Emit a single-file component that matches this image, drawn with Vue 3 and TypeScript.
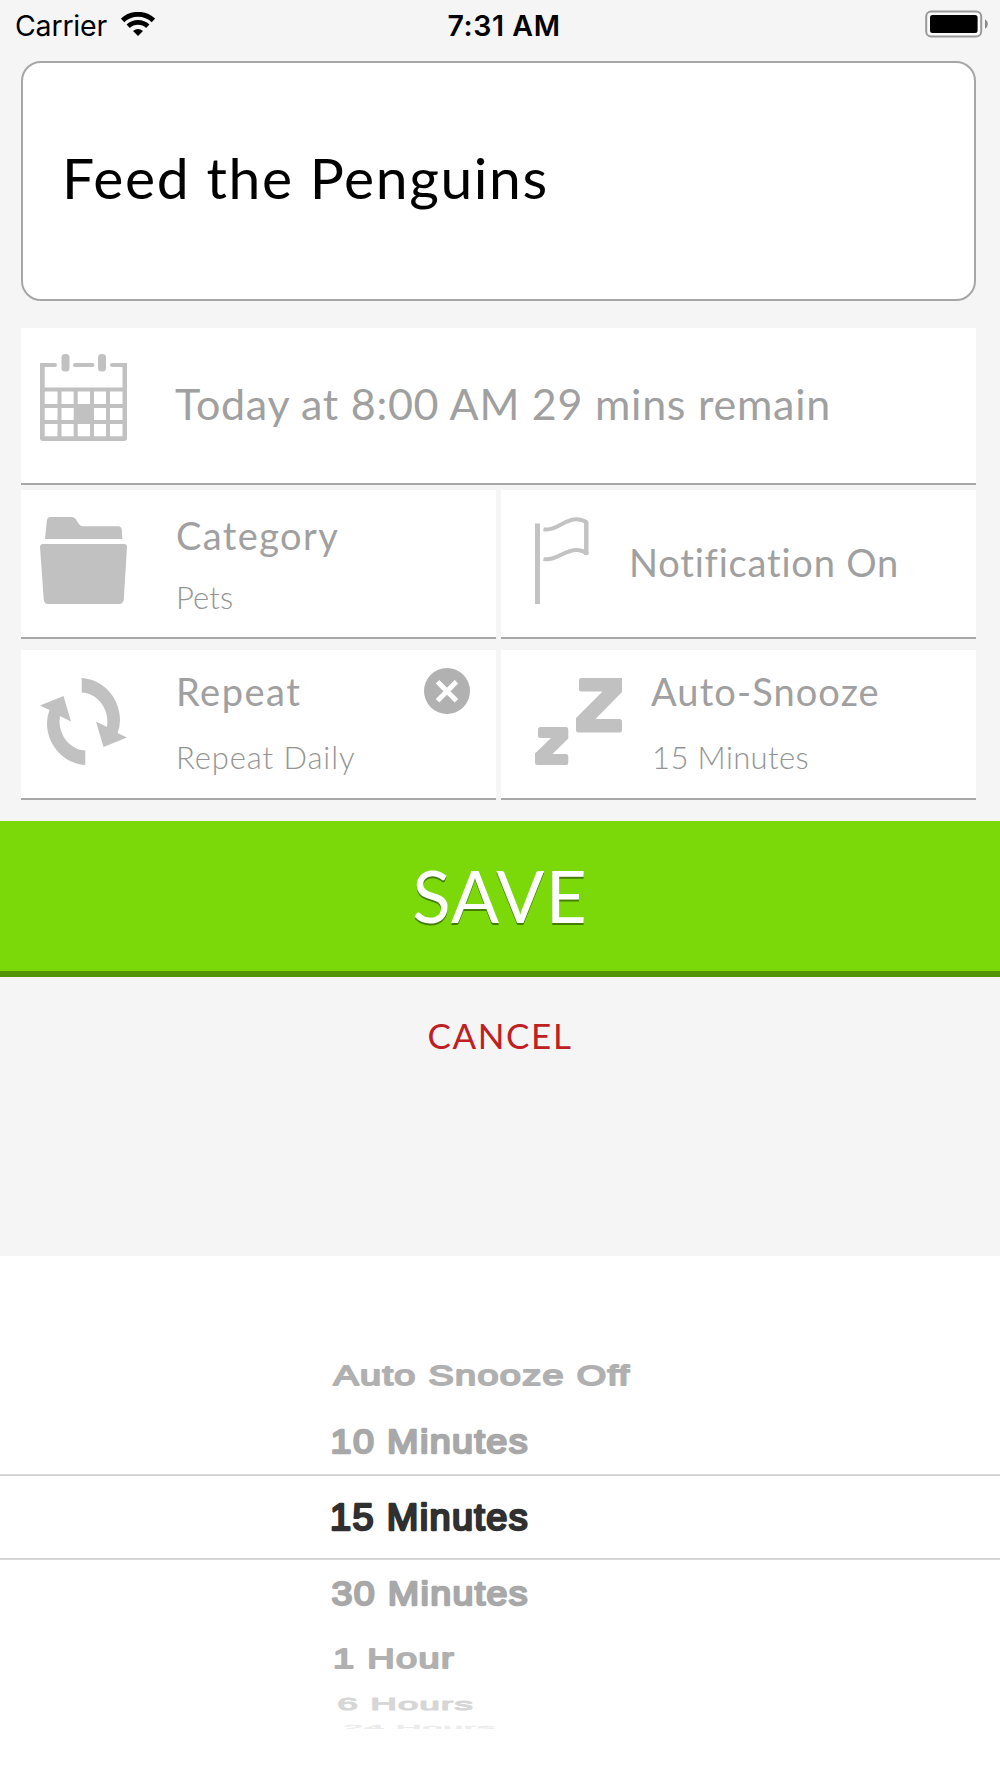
<script setup lang="ts">
interface PickerRow {
  label: string
  x: number
  baseline: number
  width: number
  squash: number
  tone: string
}

const statusTime = '7:31 AM'
const title = 'Feed the Penguins'

// Wheel rows: each one is flattened more the further it is from the centre.
const pickerRows: PickerRow[] = [
  { label: 'Auto Snooze Off', x: 333.5, baseline: 129.3, width: 297, squash: 0.755, tone: '#b0b0b0' },
  { label: '10 Minutes', x: 330.5, baseline: 197.2, width: 198.5, squash: 0.945, tone: '#a8a8a8' },
  { label: '15 Minutes', x: 330, baseline: 274, width: 199, squash: 1, tone: '#303030' },
  { label: '30 Minutes', x: 331.5, baseline: 348.9, width: 197.5, squash: 0.945, tone: '#a8a8a8' },
  { label: '1 Hour', x: 333, baseline: 411.5, width: 122, squash: 0.745, tone: '#b0b0b0' },
  { label: '6 Hours', x: 337.5, baseline: 454, width: 136.5, squash: 0.47, tone: '#d6d6d6' },
  { label: '24 Hours', x: 343.5, baseline: 474, width: 152.5, squash: 0.18, tone: '#ececec' },
]
</script>

<template>
  <main class="screen">
    <header class="status">
      <div class="carrier">
        <span class="carrier-name">Carrier</span>
        <svg class="wifi" width="34" height="24" viewBox="0 0 34 24">
          <path d="M1.6 8.4A22.3 22.3 0 0 1 32.4 8.4" fill="none" stroke="#000" stroke-width="4.8" />
          <path d="M7.2 14.2A14.2 14.2 0 0 1 26.8 14.2" fill="none" stroke="#000" stroke-width="4.8" />
          <path d="M12 19Q17 14.8 22 19L17 24Z" />
        </svg>
      </div>
      <span class="time">{{ statusTime }}</span>
      <svg class="battery" width="64" height="28" viewBox="0 0 64 28">
        <rect x="1.2" y="1.5" width="55" height="25" rx="5" fill="#fafafa" stroke="#999" stroke-width="2" />
        <rect x="5" y="5" width="47.6" height="18" rx="2.5" fill="#000" />
        <path d="M60 9.3Q62.8 10.8 62.8 14Q62.8 17.2 60 18.8Z" fill="#888" />
      </svg>
    </header>

    <section class="title-card">
      <span class="title">{{ title }}</span>
    </section>

    <section class="options">
      <div class="row row-date">
        <svg class="icon" width="87" height="87" viewBox="0 0 87 87" fill="#c1c1c1">
          <path d="M0 9H15Q17 9 17 11T15 13H4.7V33.5H82.5V13H72Q70 13 70 11T72 9H87V84Q87 87 84 87H3Q0 87 0 84Z M4.7 37.5V50H17.5V37.5Z M21.5 37.5V50H33.7V37.5Z M37.7 37.5V50H50V37.5Z M54 37.5V50H66V37.5Z M70 37.5V50H82.5V37.5Z M4.7 54V66H17.5V54Z M21.5 54V66H33.7V54Z M54 54V66H66V54Z M70 54V66H82.5V54Z M4.7 70V82.3H17.5V70Z M21.5 70V82.3H33.7V70Z M37.7 70V82.3H50V70Z M54 70V82.3H66V70Z M70 70V82.3H82.5V70Z" fill-rule="evenodd" />
          <rect x="33" y="9" width="21.5" height="4" rx="2" />
          <rect x="21.5" y="0" width="8" height="17.5" rx="3.5" />
          <rect x="58" y="0" width="8" height="17.5" rx="3.5" />
        </svg>
        <span class="date">Today at 8:00 AM 29 mins remain</span>
      </div>

      <div class="pair pair-top">
        <div class="row row-category">
          <svg class="icon" width="87" height="87" viewBox="0 0 87 87" fill="#c1c1c1">
            <path d="M5 22L6.8 4Q7.2 0 10.5 0H31Q35 0 37 4Q39.5 9.3 43 9.3H78Q81.5 9.3 81.8 13L82.3 22Z" />
            <path d="M0 30Q0 27 3 27H84Q87 27 87 30L83.8 82Q83.4 87 79 87H8Q4 87 3.7 82Z" />
          </svg>
          <div class="labels">
            <span class="name name-category">Category</span>
            <span class="value value-pets">Pets</span>
          </div>
        </div>
        <div class="row row-flag">
          <svg class="icon" width="87" height="87" viewBox="0 0 87 87" fill="none" stroke="#c3c3c3">
            <path d="M2.5 6.5V87" stroke-width="5" />
            <path d="M8.5 12.2C21 14.5 29 2.3 41.5 2.3Q47 2.3 52 5.5" stroke-width="4" />
            <path d="M51.3 4.5V38" stroke-width="4.5" />
            <path d="M8.5 42C21 44.3 29 33 41.5 33Q47.5 33 52.5 37" stroke-width="4" />
          </svg>
          <span class="name name-notify">Notification On</span>
        </div>
      </div>

      <div class="pair pair-bottom">
        <div class="row row-repeat">
          <svg class="icon" width="87" height="87" viewBox="0 0 87 87" fill="#c1c1c1">
            <path d="M41.7 0C62 1 80 19 80 42Q80 49 77.5 55L87 59.5L63.5 69L56 43.5L67 49C70 32 58 15 41.7 14.5Z" />
            <path d="M41.7 0C62 1 80 19 80 42Q80 49 77.5 55L87 59.5L63.5 69L56 43.5L67 49C70 32 58 15 41.7 14.5Z" transform="rotate(180 43.5 43.5)" />
          </svg>
          <div class="labels">
            <span class="name name-repeat">Repeat</span>
            <span class="value value-daily">Repeat Daily</span>
          </div>
          <svg class="clear" width="46" height="46" viewBox="0 0 46 46">
            <circle cx="23" cy="23" r="23" fill="#b1b1b1" />
            <path d="M13.5 13.8L32.5 32.8M32.5 13.8L13.5 32.8" stroke="#fff" stroke-width="5" />
          </svg>
        </div>
        <div class="row row-snooze">
          <svg class="icon" width="87" height="87" viewBox="0 0 87 87" fill="#c1c1c1">
            <path d="M46.5 0H87V14L60.5 41H84.5Q87 41 87 43.5V52Q87 54.5 84.5 54.5H43.5Q41 54.5 41 52V40L67.5 13.5H46.5Q44 13.5 44 11V2.5Q44 0 46.5 0Z" />
            <path d="M5.5 49H31Q33.3 49 33.3 51.5V60.5L17.5 76H31Q33.3 76 33.3 78.5V84.5Q33.3 87 31 87H2.5Q0 87 0 84.5V75.5L16 60H5.5Q3 60 3 57.5V51.5Q3 49 5.5 49Z" />
          </svg>
          <div class="labels">
            <span class="name name-snooze">Auto-Snooze</span>
            <span class="value value-minutes">15 Minutes</span>
          </div>
        </div>
      </div>
    </section>

    <button class="save" type="button"><span>SAVE</span></button>
    <button class="cancel" type="button"><span>CANCEL</span></button>

    <section class="picker">
      <svg class="wheel" width="1000" height="522" viewBox="0 0 1000 522">
        <defs>
          <clipPath id="wheel-edge"><rect width="1000" height="473" /></clipPath>
        </defs>
        <path d="M0 218.5H1000M0 303.5H1000" stroke="#dadada" />
        <path d="M0 219.5H1000M0 302.5H1000" stroke="#cfcfcf" />
        <g clip-path="url(#wheel-edge)">
          <text
            v-for="row in pickerRows"
            :key="row.label"
            class="wheel-text"
            :transform="`translate(${row.x} ${row.baseline}) scale(1 ${row.squash})`"
            :textLength="row.width"
            lengthAdjust="spacingAndGlyphs"
            :fill="row.tone"
            :stroke="row.tone"
          >{{ row.label }}</text>
        </g>
      </svg>
    </section>
  </main>
</template>

<style>
body {
  margin: 0;
  background: #f5f5f5;
}
</style>

<style scoped>
.screen {
  width: 1000px;
  height: 1778px;
  display: flex;
  flex-direction: column;
  background: #f5f5f5;
  font-family: Lato, "Open Sans", sans-serif;
  overflow: hidden;
}

.status {
  height: 61px;
  display: grid;
  grid-template-columns: 1fr auto 1fr;
  align-items: start;
  font-family: Inter, "Liberation Sans", sans-serif;
  font-size: 28.5px;
  line-height: 51px;
  color: #000;
}

.carrier {
  display: flex;
  padding-left: 15px;
}

.carrier-name {
  width: 106px;
  letter-spacing: -0.2px;
}

.wifi {
  margin-top: 12px;
}

.time {
  font-weight: 600;
  padding-left: 8px;
  letter-spacing: 0.6px;
}

.battery {
  justify-self: end;
  margin: 10px 11px 0 0;
}

.title-card {
  box-sizing: border-box;
  height: 240px;
  margin: 0 24px 0 21px;
  padding: 0 0 8px 39px;
  display: flex;
  align-items: center;
  flex: none;
  border: 2px solid #a6a6a6;
  border-radius: 20px;
  background: #fff;
}

.title {
  font-size: 57px;
  letter-spacing: 1.6px;
  white-space: nowrap;
}

.options {
  display: flex;
  flex-direction: column;
  margin: 27px 24px 0 21px;
  flex: none;
}

.row {
  box-sizing: border-box;
  display: flex;
  align-items: flex-start;
  height: 150px;
  border-bottom: 2px solid #a8a8a8;
  background: #fff;
  color: #a0a0a0;
  white-space: nowrap;
}

.row-date {
  height: 157px;
  margin-bottom: 5px;
}

.pair {
  display: grid;
  grid-template-columns: 475px 475px;
  gap: 5px;
}

.pair-top .row {
  height: 149px;
}

.pair-bottom {
  margin-top: 11px;
}

.icon {
  flex: none;
  margin: 27px 0 0 19px;
}

.row-date .icon {
  margin-top: 25.5px;
}

.pair-bottom .icon {
  margin-top: 28px;
}

.row-flag .icon,
.row-snooze .icon {
  margin-left: 34px;
}

.labels {
  display: flex;
  flex-direction: column;
  gap: 20px;
  margin: 22px 0 0 49px;
}

.pair-bottom .labels {
  gap: 24px;
  margin-top: 18px;
}

.row-repeat .labels {
  width: 248px;
}

.row-snooze .labels {
  margin-left: 29px;
}

.date {
  margin: 50px 0 0 48px;
  font-size: 43px;
  line-height: 52px;
  letter-spacing: 0.74px;
}

.name {
  font-size: 38px;
  line-height: 46px;
}

.name-category {
  letter-spacing: 1.4px;
}

.name-repeat {
  letter-spacing: 1.5px;
}

.name-notify {
  margin: 49px 0 0 7px;
  letter-spacing: 0.8px;
}

.name-snooze {
  letter-spacing: 1.1px;
}

.value {
  font-size: 31px;
  line-height: 38px;
  font-weight: 300;
  color: #949494;
}

.value-pets {
  letter-spacing: 0.1px;
}

.value-daily {
  letter-spacing: 0.9px;
}

.value-minutes {
  padding-left: 1px;
  letter-spacing: 0.4px;
}

.clear {
  flex: none;
  margin-top: 18px;
}

.save,
.cancel {
  border: 0;
  padding: 0;
  font-family: inherit;
  flex: none;
}

.save {
  box-sizing: border-box;
  height: 156px;
  margin-top: 21px;
  border-bottom: 6px solid #529406;
  background: #7bd90a;
  color: #fff;
  font-size: 71px;
  line-height: 84px;
  letter-spacing: 1.2px;
  text-shadow: 0 2px 0 #467d06;
}

.cancel {
  height: 60px;
  margin-top: 28px;
  background: transparent;
  color: #bf2022;
  font-size: 35px;
  line-height: 60px;
  letter-spacing: 1.6px;
}

.picker {
  height: 522px;
  margin-top: auto;
  flex: none;
  background: #fff;
}

.wheel {
  display: block;
}

.wheel-text {
  font-family: "Liberation Sans", Arial, sans-serif;
  font-size: 36px;
  letter-spacing: 1.3px;
  stroke-width: 2.4px;
  stroke-linejoin: round;
}
</style>
